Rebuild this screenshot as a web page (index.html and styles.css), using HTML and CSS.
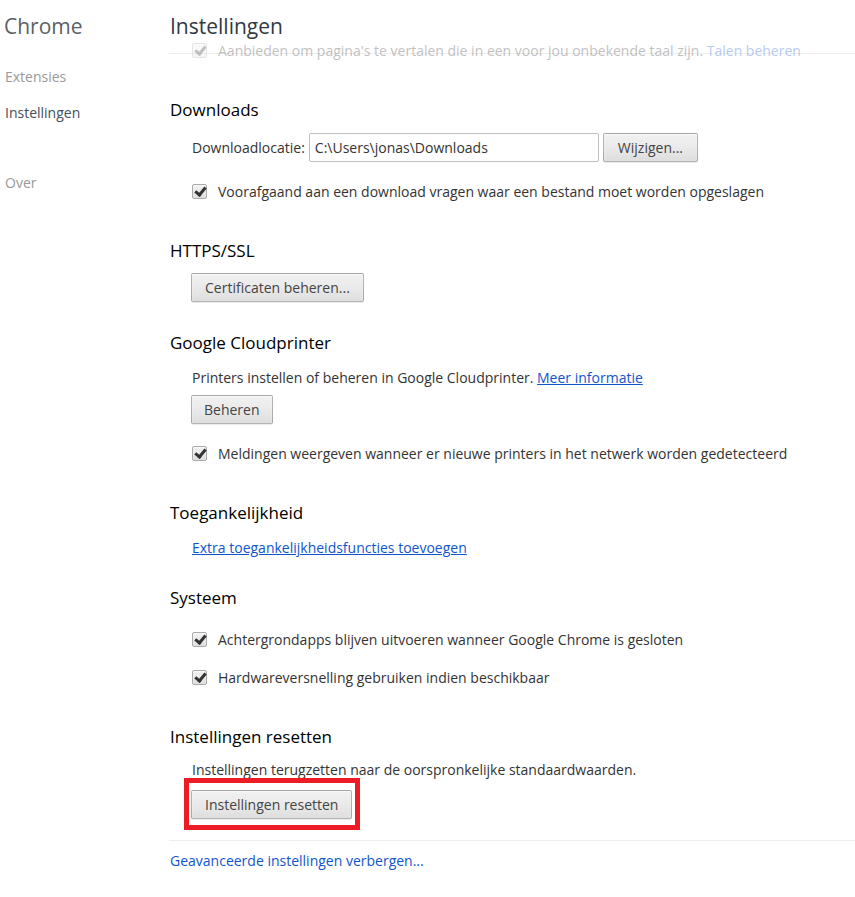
FILE: index.html
```html
<!DOCTYPE html>
<html>
<head>
    <title>Instellingen</title>
    <link rel="stylesheet" href="styles.css">
</head>
<body>
    <div class="page">
        <nav class="nav">
            <h1 class="nav-title">Chrome</h1>
            <ul class="nav-list">
                <li><a href="#">Extensies</a></li>
                <li class="selected"><a href="#">Instellingen</a></li>
                <li class="nav-gap"><a href="#">Over</a></li>
            </ul>
        </nav>

        <main class="main">
            <header class="page-header">
                <h1>Instellingen</h1>
            </header>

            <div class="faded-row">
                <label class="checkbox-row">
                    <span class="checkbox checked"></span>
                    <span>Aanbieden om pagina's te vertalen die in een voor jou onbekende taal zijn. <a href="#" class="plain-link">Talen beheren</a></span>
                </label>
            </div>

            <section class="section">
                <h3>Downloads</h3>
                <div class="section-body">
                    <div class="download-row">
                        <span>Downloadlocatie:</span>
                        <input type="text" class="path-input" value="C:\Users\jonas\Downloads">
                        <button>Wijzigen...</button>
                    </div>
                    <label class="checkbox-row">
                        <span class="checkbox checked"></span>
                        <span>Voorafgaand aan een download vragen waar een bestand moet worden opgeslagen</span>
                    </label>
                </div>
            </section>

            <section class="section">
                <h3>HTTPS/SSL</h3>
                <div class="section-body">
                    <button>Certificaten beheren...</button>
                </div>
            </section>

            <section class="section">
                <h3>Google Cloudprinter</h3>
                <div class="section-body">
                    <div class="text-row">Printers instellen of beheren in Google Cloudprinter. <a href="#">Meer informatie</a></div>
                    <button class="after-text">Beheren</button>
                    <label class="checkbox-row">
                        <span class="checkbox checked"></span>
                        <span>Meldingen weergeven wanneer er nieuwe printers in het netwerk worden gedetecteerd</span>
                    </label>
                </div>
            </section>

            <section class="section">
                <h3>Toegankelijkheid</h3>
                <div class="section-body">
                    <div class="text-row"><a href="#">Extra toegankelijkheidsfuncties toevoegen</a></div>
                </div>
            </section>

            <section class="section">
                <h3>Systeem</h3>
                <div class="section-body">
                    <label class="checkbox-row">
                        <span class="checkbox checked"></span>
                        <span>Achtergrondapps blijven uitvoeren wanneer Google Chrome is gesloten</span>
                    </label>
                    <label class="checkbox-row">
                        <span class="checkbox checked"></span>
                        <span>Hardwareversnelling gebruiken indien beschikbaar</span>
                    </label>
                </div>
            </section>

            <section class="section last">
                <h3>Instellingen resetten</h3>
                <div class="section-body">
                    <div class="text-row reset-text">Instellingen terugzetten naar de oorspronkelijke standaardwaarden.</div>
                    <div class="highlight">
                        <button>Instellingen resetten</button>
                    </div>
                </div>
            </section>

            <div class="footer">
                <a href="#" class="plain-link">Geavanceerde instellingen verbergen...</a>
            </div>
        </main>
    </div>
</body>
</html>
```

FILE: styles.css
```css
body {
    margin: 0;
    padding: 0;
    background: white;
    font-family: "Open Sans", "Noto Sans", sans-serif;
    font-size: 14px;
    color: #333;
}

.page {
    display: flex;
}

/* linker menu */
.nav {
    width: 169px;
    flex-shrink: 0;
}

.nav-title {
    margin: 0;
    padding-left: 4px;
    height: 53px;
    line-height: 53px;
    font-size: 21px;
    font-weight: normal;
    color: #5c6166;
}

.nav-list {
    list-style: none;
    margin: 0;
    padding: 0 0 0 5px;
}

.nav-list li {
    height: 36px;
    line-height: 22px;
}

.nav-list li:first-child {
    margin-top: 13px;
}

.nav-list a {
    color: #999;
    text-decoration: none;
}

.nav-list .selected a {
    color: #464e5a;
}

.nav-list .nav-gap {
    margin-top: 34px;
}

/* inhoud */
.main {
    flex: 1;
}

.page-header {
    height: 53px;
    border-bottom: 1px solid #eee;
}

.page-header h1 {
    margin: 0;
    padding-left: 1px;
    line-height: 53px;
    font-size: 21px;
    font-weight: normal;
    color: #303942;
}

.faded-row {
    margin-top: -23px;
    padding-left: 23px;
    opacity: 0.3;
}

.section {
    margin-top: 29px;
}

.section.last {
    padding-bottom: 10px;
    border-bottom: 1px solid #eee;
}

.section h3 {
    margin: 0 0 10px;
    padding-left: 1px;
    line-height: 24px;
    font-size: 17px;
    font-weight: normal;
    color: #000;
}

.section-body {
    padding-left: 23px;
    display: flex;
    flex-direction: column;
    align-items: flex-start;
}

.text-row {
    line-height: 22px;
    margin-top: 2px;
}

.text-row:last-child {
    margin-bottom: -2px;
}

.reset-text {
    margin-top: 0;
}

a {
    color: #15c;
}

.plain-link {
    text-decoration: none;
}

.download-row {
    display: flex;
    align-items: center;
    gap: 4px;
    margin-top: 1px;
}

.path-input {
    width: 290px;
    height: 29px;
    box-sizing: border-box;
    padding: 0 5px;
    border: 1px solid #bfbfbf;
    border-radius: 2px;
    font-family: inherit;
    font-size: 14px;
    color: #333;
}

button {
    height: 29px;
    padding: 0 13px;
    border: 1px solid rgba(0, 0, 0, 0.25);
    border-radius: 2px;
    background: linear-gradient(#f0f0f0, #ececec 40%, #dedede);
    box-shadow: 0 1px 0 rgba(0, 0, 0, 0.08), inset 0 1px 2px rgba(255, 255, 255, 0.75);
    font-family: inherit;
    font-size: 14px;
    color: #444;
    margin-left: -1px;
}

.download-row button {
    margin-left: 0;
    padding: 0 14px;
}

.after-text {
    margin-top: 6px;
    padding: 0 12px;
}

.checkbox-row {
    display: flex;
    align-items: center;
    gap: 11px;
    height: 22px;
    padding: 8px 0;
}

.download-row + .checkbox-row,
.after-text + .checkbox-row {
    margin-top: 10px;
}

.checkbox {
    width: 15px;
    height: 15px;
    box-sizing: border-box;
    border: 1px solid #aaa;
    border-radius: 2px;
    background: linear-gradient(#ededed, #ededed 38%, #dedede);
    box-shadow: inset 0 1px 2px rgba(255, 255, 255, 0.75);
    position: relative;
    flex-shrink: 0;
}

/* vinkje */
.checkbox.checked::after {
    content: "";
    position: absolute;
    left: 4px;
    top: 0;
    width: 4px;
    height: 8px;
    border: solid #333;
    border-width: 0 3px 3px 0;
    transform: rotate(40deg);
}

.highlight {
    margin: -3px 0 0 -8px;
    border: 5px solid #ed1c24;
    padding: 7px 3px 6px 2px;
}

.highlight button {
    margin-left: 0;
    display: block;
}

.footer {
    padding: 9px 0 0 1px;
    line-height: 22px;
}
```
